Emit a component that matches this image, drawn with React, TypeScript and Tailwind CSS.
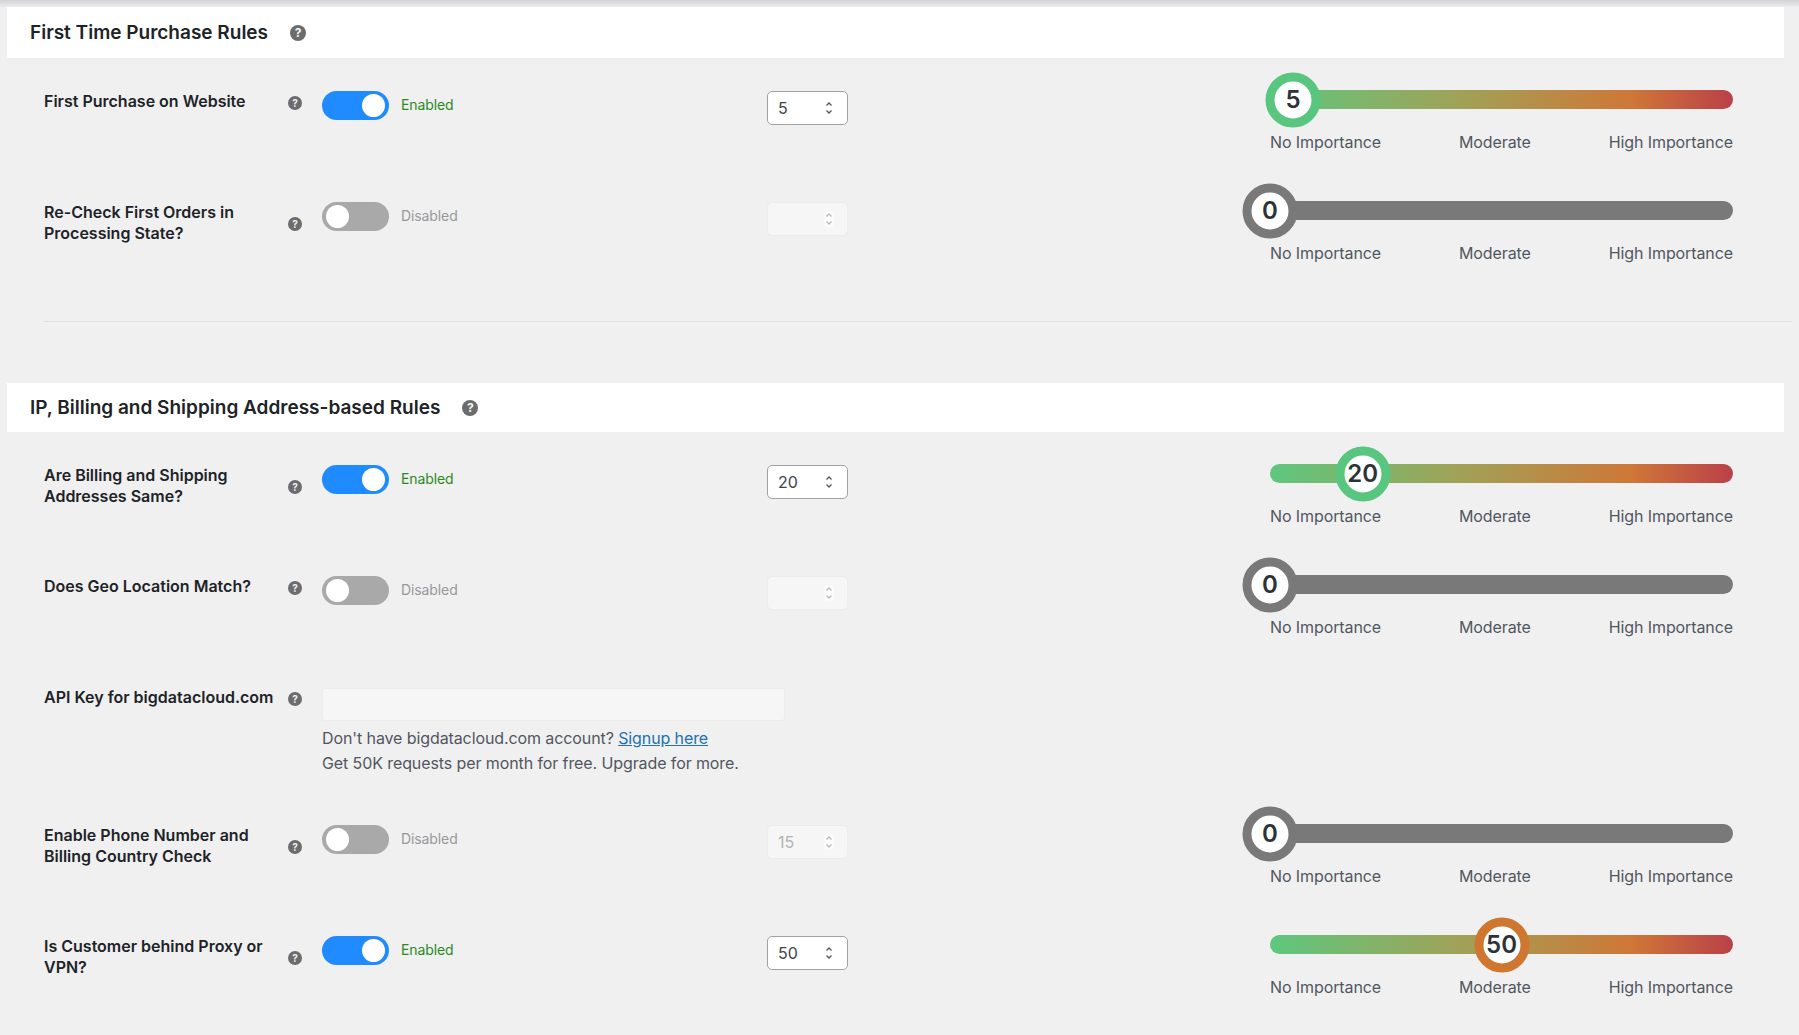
import React from "react";

function Help({ big = false }: { big?: boolean }) {
  return (
    <span
      className={
        big
          ? "flex h-[16px] w-[16px] shrink-0 items-center justify-center rounded-full bg-[#6c6c6e] text-[12px] leading-none font-bold text-[#f4f4f4]"
          : "flex h-[14px] w-[14px] shrink-0 items-center justify-center rounded-full bg-[#6c6c6e] text-[10px] leading-none font-bold text-[#f0f0f1]"
      }
    >
      ?
    </span>
  );
}

function SectionHeader({ title, tall }: { title: string; tall: boolean }) {
  return (
    <div
      className={`ml-[7px] flex w-[1777px] items-center bg-white pl-[23px] ${tall ? "h-[51px]" : "h-[49px]"}`}
    >
      <h2 className="pt-[1px] text-[19px] leading-[28px] font-semibold text-[#1d2327]">{title}</h2>
      <span className="ml-[22px]">
        <Help big />
      </span>
    </div>
  );
}

function Toggle({ on }: { on: boolean }) {
  return (
    <div className="flex items-center">
      <div
        className={`flex h-[29px] w-[67px] items-center rounded-full px-[4px] ${on ? "justify-end bg-[#1f8bff]" : "justify-start bg-[#a9a9aa]"}`}
      >
        <span className="h-[23px] w-[23px] rounded-full bg-white" />
      </div>
      <span
        className={`mb-[2px] ml-[12px] text-[14px] leading-[27px] tracking-[-0.1px] ${on ? "text-[#2a8a1f]" : "text-[#98999b]"}`}
      >
        {on ? "Enabled" : "Disabled"}
      </span>
    </div>
  );
}

function Spinner({ on }: { on: boolean }) {
  const c = on ? "#50575e" : "#b9bbbe";
  return (
    <svg width="10" height="16" viewBox="0 0 10 16" fill="none" className="shrink-0">
      <rect x="0" y="0" width="10" height="16" rx="4" fill="#ffffff" opacity={on ? 0.6 : 0.5} />
      <path d="M2.5 5.5 L5 3 L7.5 5.5" stroke={c} strokeWidth="1.3" />
      <path d="M2.5 10.5 L5 13 L7.5 10.5" stroke={c} strokeWidth="1.3" />
    </svg>
  );
}

function NumberBox({ on, value }: { on: boolean; value: string }) {
  return (
    <div
      className={`flex h-[34px] w-[81px] items-center justify-between rounded-[5px] pr-[13px] pl-[10px] text-[16px] ${on ? "border-[1.5px] border-[#a0a2a5] bg-white text-[#3c434a]" : "border border-[#ececec] bg-[#f6f6f7] text-[#b0b2b5]"}`}
    >
      <span>{value}</span>
      <Spinner on={on} />
    </div>
  );
}

function Slider({ value, on }: { value: number; on: boolean }) {
  const ring = !on ? "border-[#797979]" : value >= 40 ? "border-[#cf7730]" : "border-[#58c67f]";
  return (
    <div className="w-[463px]">
      <div className="relative mt-[32px] h-[19px]">
        <div
          className={`h-[19px] rounded-full ${on ? "bg-[linear-gradient(90deg,#5ec77e_0%,#9fa358_40%,#cf7737_78%,#ba4049_100%)]" : "bg-[#797979]"}`}
        />
        <div
          className={`absolute top-1/2 flex h-[55px] w-[55px] -translate-x-1/2 -translate-y-1/2 items-center justify-center rounded-full border-[9px] bg-white text-[24px] font-semibold text-[#2c3338] ${ring}`}
          style={{ left: `${value}%` }}
        >
          {value}
        </div>
      </div>
      <div className="mt-[21px] flex justify-between text-[16px] leading-[24px] tracking-[-0.1px] text-[#50575e]">
        <span>No Importance</span>
        <span>Moderate</span>
        <span>High Importance</span>
      </div>
    </div>
  );
}

function LabelCell({ label }: { label: string }) {
  return (
    <div className="flex h-fit w-[278px] items-center pt-[33px]">
      <div className="w-[244px] text-[16px] leading-[21px] font-semibold text-[#1d2327]">{label}</div>
      <span className="mt-[2px]">
        <Help />
      </span>
    </div>
  );
}

function Row({
  label,
  on,
  input,
  value,
}: {
  label: string;
  on: boolean;
  input: string;
  value: number;
}) {
  return (
    <div className="flex h-[111px] pl-[44px]">
      <LabelCell label={label} />
      <div className="w-[445px] pt-[33px]">
        <Toggle on={on} />
      </div>
      <div className="w-[503px] pt-[33px]">
        <NumberBox on={on} value={input} />
      </div>
      <Slider value={value} on={on} />
    </div>
  );
}

export default function App() {
  return (
    <div
      className="min-h-[1035px] w-full overflow-hidden bg-[#f0f0f1]"
      style={{ fontFamily: "Inter, 'Liberation Sans', sans-serif" }}
    >
      <div className="h-[7px] bg-gradient-to-b from-[#d2d3d5] to-[#ececed]" />
      <SectionHeader title="First Time Purchase Rules" tall />
      <Row label="First Purchase on Website" on input="5" value={5} />
      <Row label="Re-Check First Orders in Processing State?" on={false} input="" value={0} />
      <div className="mt-[41px] ml-[44px] h-px w-[1748px] bg-[#dfdfe0]" />
      <div className="h-[61px]" />
      <SectionHeader title="IP, Billing and Shipping Address-based Rules" tall={false} />
      <Row label="Are Billing and Shipping Addresses Same?" on input="20" value={20} />
      <Row label="Does Geo Location Match?" on={false} input="" value={0} />
      <div className="flex h-[138px] pl-[44px]">
        <LabelCell label="API Key for bigdatacloud.com" />
        <div className="pt-[34px]">
          <div className="h-[33px] w-[463px] rounded-[3px] border border-[#ececec] bg-[#f6f6f7]" />
          <p className="mt-[5px] text-[16px] leading-[25px] tracking-[-0.1px] text-[#50575e]">
            Don't have bigdatacloud.com account?{" "}
            <a href="#" className="text-[#2271b1] underline">
              Signup here
            </a>
          </p>
          <p className="text-[16px] leading-[25px] tracking-[-0.1px] text-[#50575e]">
            Get 50K requests per month for free. Upgrade for more.
          </p>
        </div>
      </div>
      <Row label="Enable Phone Number and Billing Country Check" on={false} input="15" value={0} />
      <Row label="Is Customer behind Proxy or VPN?" on input="50" value={50} />
    </div>
  );
}
